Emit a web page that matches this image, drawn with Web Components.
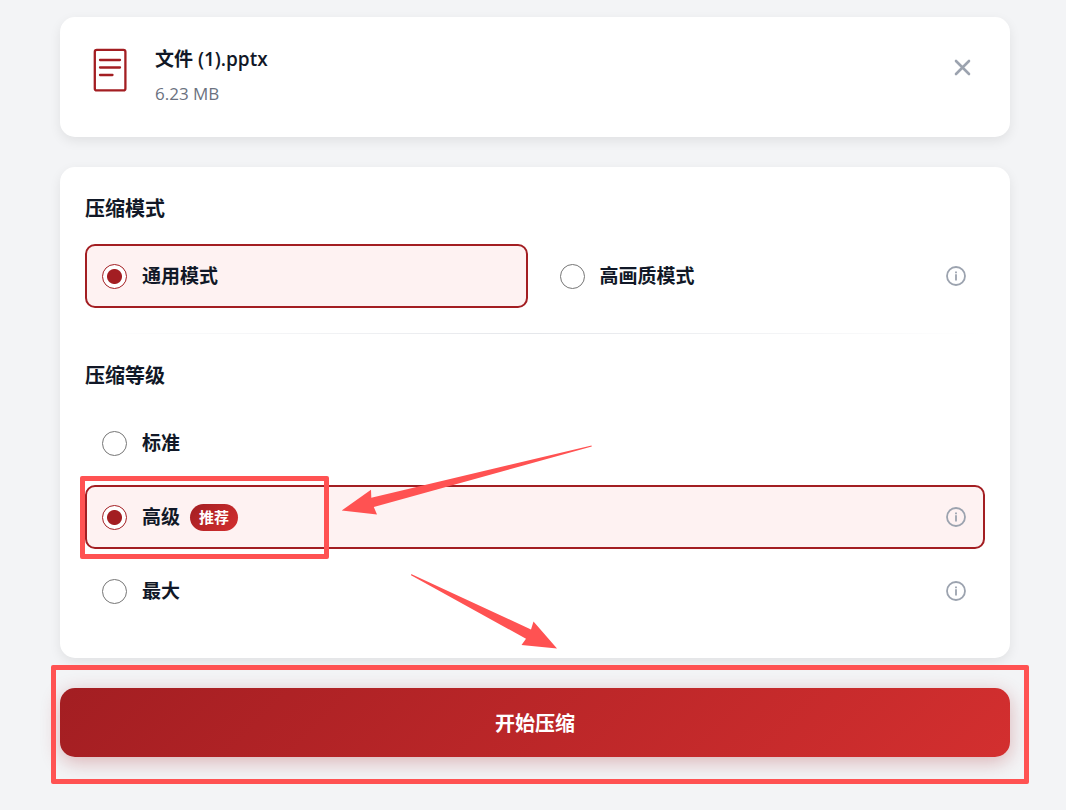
<!DOCTYPE html>
<html lang="zh-CN">
<head>
<meta charset="utf-8">
<meta name="viewport" content="width=device-width, initial-scale=1">
<title>文件压缩</title>
<style>
  :root {
    --brand: #a31e22;
    --brand-light: #d32f2f;
    --tint: #fef2f2;
    --ink: #111827;
    --muted: #6b7280;
    --faint: #9ca3af;
    --mark: #ff5252;
    --gradient: linear-gradient(135deg, var(--brand) 0%, var(--brand-light) 100%);
  }
  body {
    margin: 0;
    padding: 17px 56px 53px 60px;
    background: #f3f4f6;
    color: var(--ink);
    font-family: "Open Sans", "Noto Sans CJK SC", sans-serif;
  }
  main { display: flex; flex-direction: column; gap: 30px; }
</style>
</head>
<body>
<main>
  <file-card>
    <span slot="name">文件 (1).pptx</span>
    <span slot="size">6.23 MB</span>
  </file-card>
  <panel-card>
    <option-section heading="压缩模式" layout="columns">
      <option-card name="mode" value="general" checked>通用模式</option-card>
      <option-card name="mode" value="quality" info>高画质模式</option-card>
    </option-section>
    <soft-divider></soft-divider>
    <option-section heading="压缩等级">
      <option-card name="level" value="standard">标准</option-card>
      <option-card name="level" value="high" checked info>高级<pill-badge slot="badge">推荐</pill-badge><mark-box slot="mark" kind="option"></mark-box></option-card>
      <option-card name="level" value="max" info>最大</option-card>
    </option-section>
    <mark-arrows slot="overlay"></mark-arrows>
  </panel-card>
  <start-button>开始压缩<mark-box slot="mark" kind="button"></mark-box></start-button>
</main>
<script>
  const define = (name, html, setup) => {
    const template = document.createElement('template');
    template.innerHTML = html;
    customElements.define(name, class extends HTMLElement {
      constructor() {
        super();
        this.attachShadow({ mode: 'open' }).append(template.content.cloneNode(true));
      }
      connectedCallback() {
        if (setup) setup(this, this.shadowRoot);
      }
    });
  };

  define('file-card', `
    <style>
      :host { display: flex; align-items: flex-start; gap: 20px; padding: 28px 25px 30px; background: #fff; border-radius: 15px; box-shadow: 0 4px 12px rgba(0,0,0,.08); }
      .icon { flex: none; width: 50px; height: 50px; }
      .text { flex: 1; min-width: 0; }
      .name { font-size: 19px; line-height: 28px; font-weight: 600; }
      .size { margin-top: 8px; font-size: 17px; line-height: 26px; font-weight: 400; color: var(--muted); }
      button { flex: none; width: 45px; height: 45px; padding: 0; border: 0; background: none; color: var(--faint); cursor: pointer; }
      button svg { display: block; }
    </style>
    <svg class="icon" viewBox="0 0 50 50" fill="none" stroke="#a31e22" stroke-linecap="round" aria-hidden="true">
      <rect x="9.8" y="4.8" width="30.6" height="40.6" rx="2" stroke-width="2.3"/>
      <path d="M15 15H35M15 22.5H35M15 30H27.5" stroke-width="2.3"/>
    </svg>
    <div class="text">
      <div class="name"><slot name="name"></slot></div>
      <div class="size"><slot name="size"></slot></div>
    </div>
    <button type="button" aria-label="移除文件">
      <svg width="45" height="45" viewBox="0 0 45 45" fill="none" stroke="currentColor" stroke-width="2.6" stroke-linecap="round"><path d="M16 16L29 29M29 16L16 29"/></svg>
    </button>
  `);

  define('panel-card', `
    <style>
      :host { display: block; position: relative; padding: 25px 25px 35px; background: #fff; border-radius: 15px; box-shadow: 0 4px 12px rgba(0,0,0,.08); }
    </style>
    <slot></slot>
    <slot name="overlay"></slot>
  `);

  define('option-section', `
    <style>
      :host { display: block; }
      h2 { margin: 0 0 18px; font-size: 20px; line-height: 34px; font-weight: 700; }
      .list { display: grid; gap: 10px; }
      :host([layout="columns"]) .list { grid-template-columns: 1fr 1fr; gap: 15px; }
    </style>
    <section role="radiogroup" aria-labelledby="title">
      <h2 id="title"></h2>
      <div class="list"><slot></slot></div>
    </section>
  `, (host, root) => {
    root.querySelector('h2').textContent = host.getAttribute('heading');
    // Radios live in separate shadow roots, so the section keeps them exclusive.
    host.addEventListener('option-select', (event) => {
      for (const card of host.querySelectorAll('option-card')) {
        const on = card === event.target;
        card.toggleAttribute('checked', on);
        card.shadowRoot.querySelector('input').checked = on;
      }
    });
  });

  define('option-card', `
    <style>
      :host { display: flex; position: relative; box-sizing: border-box; align-items: center; height: 64px; padding: 0 15px; border: 2px solid transparent; border-radius: 10px; }
      :host([checked]) { border-color: var(--brand); background: var(--tint); }
      label { display: flex; flex: 1; align-items: center; align-self: stretch; gap: 15px; font-size: 19px; line-height: 28px; cursor: pointer; }
      input { appearance: none; flex: none; box-sizing: border-box; width: 25px; height: 25px; margin: 0; border: 1px solid #767676; border-radius: 50%; background: #fff; }
      input:checked { border-color: var(--brand); background: radial-gradient(circle, var(--brand) 7px, #fff 8px); }
      .label { display: flex; align-items: center; gap: 10px; font-weight: 700; }
      button { flex: none; display: none; padding: 2px; border: 0; background: none; color: var(--faint); }
      :host([info]) button { display: block; }
      button svg { display: block; }
    </style>
    <label><input type="radio"><span class="label"><slot></slot><slot name="badge"></slot></span></label>
    <button type="button" aria-label="说明">
      <svg width="20" height="20" viewBox="0 0 20 20" fill="none" stroke="currentColor"><circle cx="10" cy="10" r="9" stroke-width="1.8"/><path d="M10 8.2V14.4" stroke-width="1.8"/><path d="M10 5.4V7.2" stroke-width="1.8"/></svg>
    </button>
    <slot name="mark"></slot>
  `, (host, root) => {
    const input = root.querySelector('input');
    input.name = host.getAttribute('name');
    input.value = host.getAttribute('value');
    input.checked = host.hasAttribute('checked');
    input.addEventListener('change', () => host.dispatchEvent(new CustomEvent('option-select', { bubbles: true })));
  });

  define('pill-badge', `
    <style>
      :host { display: inline-block; padding: 0 9px; border-radius: 14px; background: var(--gradient); color: #fff; font-size: 15px; line-height: 27px; font-weight: 700; }
    </style>
    <slot></slot>
  `);

  define('soft-divider', `
    <style>
      :host { display: block; height: 1px; margin: 25px 0; background: linear-gradient(90deg, transparent, #e5e7eb, transparent); }
    </style>
  `);

  define('start-button', `
    <style>
      :host { display: block; position: relative; }
      button { display: block; width: 100%; padding: 21px 20px 18px; border: 0; border-radius: 15px; background: var(--gradient); color: #fff; font-family: inherit; font-size: 20px; line-height: 30px; font-weight: 700; box-shadow: 0 5px 19px rgba(163,30,34,.3); cursor: pointer; }
    </style>
    <button type="button"><slot></slot></button>
    <slot name="mark"></slot>
  `);

  // Hand-drawn style highlight frames that lie over the control they point out.
  define('mark-box', `
    <style>
      :host { position: absolute; box-sizing: border-box; border: 5px solid var(--mark); border-radius: 2px; pointer-events: none; }
      :host([kind="option"]) { left: -7px; top: -11px; bottom: -12px; width: 249px; }
      :host([kind="button"]) { left: -9px; right: -19px; top: -23px; bottom: -27px; }
    </style>
  `);

  define('mark-arrows', `
    <style>
      :host { position: absolute; left: 0; top: 0; pointer-events: none; }
      svg { display: block; }
    </style>
    <svg width="560" height="491" viewBox="60 167 560 491" fill="#ff5252" aria-hidden="true">
      <path d="M341.7 510.5L371 489.7L371.3 497.8L591.5 445.4L591.8 446.6L373.8 507L377 514.6Z"/>
      <path d="M411 574.3L412.2 574.4L531 629.5L533.5 621.6L557 648.6L521.5 645L526 638.8L411 575.3Z"/>
    </svg>
  `);
</script>
</body>
</html>
